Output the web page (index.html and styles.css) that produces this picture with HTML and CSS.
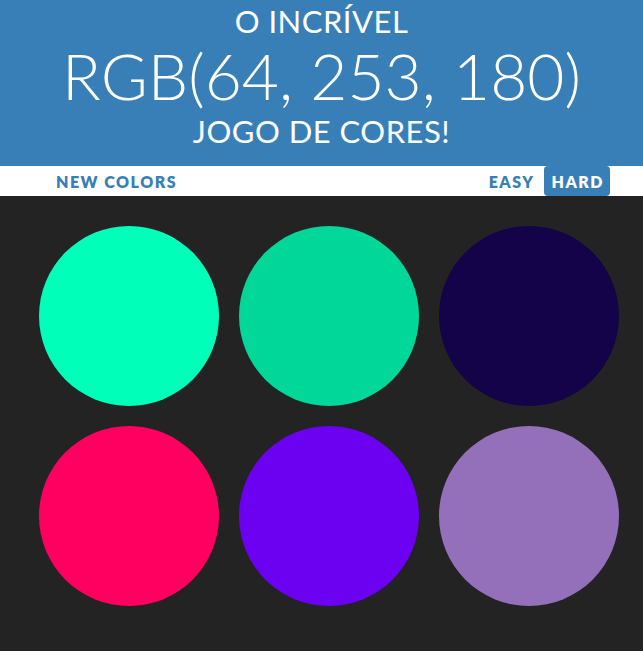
FILE: index.html
```html
<!DOCTYPE html>
<html lang="pt">
<head>
<meta charset="utf-8">
<title>Jogo de Cores</title>
<link rel="stylesheet" href="styles.css">
</head>
<body>
<header class="header">
  <div class="line-small">O INCRÍVEL</div>
  <div class="line-big">RGB(64, 253, 180)</div>
  <div class="line-small">JOGO DE CORES!</div>
</header>
<nav class="stripe">
  <button class="btn btn-new">NEW COLORS</button>
  <div class="modes">
    <button class="btn">EASY</button>
    <button class="btn selected">HARD</button>
  </div>
</nav>
<main class="board">
  <div class="square c1"></div>
  <div class="square c2"></div>
  <div class="square c3"></div>
  <div class="square c4"></div>
  <div class="square c5"></div>
  <div class="square c6"></div>
</main>
</body>
</html>
```
FILE: styles.css
```css
html, body {
  margin: 0;
  padding: 0;
  background: #232323;
  height: 100%;
  overflow: hidden;
}
body {
  font-family: Lato, "Open Sans", sans-serif;
}
.header {
  background: #387fb8;
  color: #fff;
  text-align: center;
  height: 166px;
  padding-top: 3px;
  box-sizing: border-box;
}
.line-small {
  font-size: 31px;
  line-height: 36px;
  font-weight: 400;
  letter-spacing: 0.5px;
}
.line-big {
  font-size: 64px;
  line-height: 74px;
  font-weight: 300;
}
.stripe {
  background: #fff;
  height: 30px;
  display: flex;
  justify-content: space-between;
  align-items: stretch;
  padding: 0 33px 0 49px;
}
.modes {
  display: flex;
  gap: 4px;
}
.btn {
  border: none;
  background: none;
  color: #387fb8;
  font-family: Lato, "Open Sans", sans-serif;
  font-weight: 800;
  font-size: 16px;
  letter-spacing: 1.5px;
  padding: 0 6px 0 7px;
  margin: 0;
  height: 30px;
}
.btn.selected {
  background: #387fb8;
  color: #fff;
  border-radius: 4px;
}
.board {
  display: grid;
  grid-template-columns: repeat(3, 180px);
  gap: 20px;
  padding: 30px 0 0 39px;
}
.square {
  width: 180px;
  height: 180px;
  border-radius: 50%;
}
.c1 { background: rgb(0, 255, 185); }
.c2 { background: rgb(0, 215, 152); }
.c3 { background: rgb(20, 3, 72); }
.c4 { background: rgb(255, 0, 97); }
.c5 { background: rgb(108, 0, 240); }
.c6 { background: rgb(148, 112, 186); }
```
